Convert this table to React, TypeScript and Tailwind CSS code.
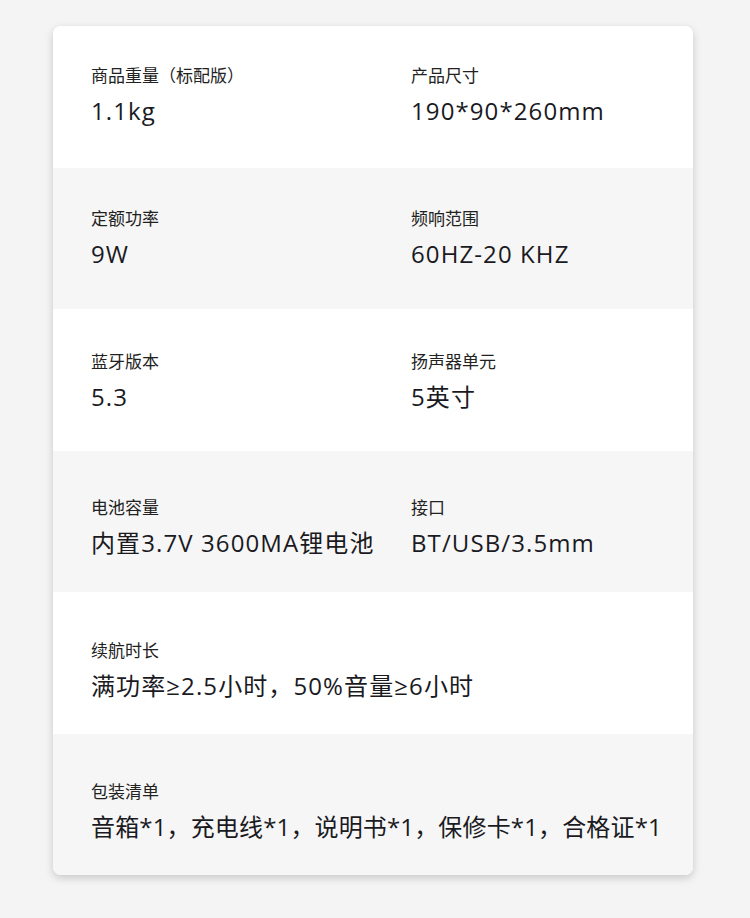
import React from "react";

const rows: { l: string; v: string; l2?: string; v2?: string; pt: string; tr?: string }[] = [
  { l: "商品重量（标配版）", v: "1.1kg", l2: "产品尺寸", v2: "190*90*260mm", pt: "pt-[37px]" },
  { l: "定额功率", v: "9W", l2: "频响范围", v2: "60HZ-20 KHZ", pt: "pt-[38px]" },
  { l: "蓝牙版本", v: "5.3", l2: "扬声器单元", v2: "5英寸", pt: "pt-[40px]" },
  { l: "电池容量", v: "内置3.7V 3600MA锂电池", l2: "接口", v2: "BT/USB/3.5mm", pt: "pt-[44px]" },
  { l: "续航时长", v: "满功率≥2.5小时，50%音量≥6小时", pt: "pt-[46px]" },
  { l: "包装清单", v: "音箱*1，充电线*1，说明书*1，保修卡*1，合格证*1", pt: "pt-[45px]", tr: "tracking-[0.15px]" },
];

function Cell({ l, v, pt, tr }: { l: string; v: string; pt: string; tr?: string }) {
  return (
    <div className={`flex flex-col pl-[38px] ${pt}`}>
      <div className="text-[17px] leading-[24px] text-[#222]">{l}</div>
      <div
        className={`mt-[9px] text-[24px] leading-[30px] ${tr ?? "tracking-[1.1px]"} text-[#1a1a1f] whitespace-nowrap`}
        style={{ fontFamily: '"Open Sans", "Noto Sans CJK SC", sans-serif' }}
      >
        {v}
      </div>
    </div>
  );
}

export default function App() {
  return (
    <div
      className="w-[750px] h-[918px] bg-[#f4f4f4] pt-[26px] pl-[53px]"
      style={{ fontFamily: '"Noto Sans CJK SC", "Noto Sans", sans-serif' }}
    >
      <div className="w-[640px] rounded-[8px] bg-white overflow-hidden shadow-[0_3px_8px_rgba(0,0,0,0.18)]">
        {rows.map((r, i) => (
          <div
            key={i}
            className={`h-[141.5px] grid grid-cols-2 ${i % 2 === 1 ? "bg-[#f6f6f6]" : "bg-white"}`}
          >
            <Cell l={r.l} v={r.v} pt={r.pt} tr={r.tr} />
            {r.l2 ? <Cell l={r.l2} v={r.v2 || ""} pt={r.pt} /> : <div />}
          </div>
        ))}
      </div>
    </div>
  );
}
